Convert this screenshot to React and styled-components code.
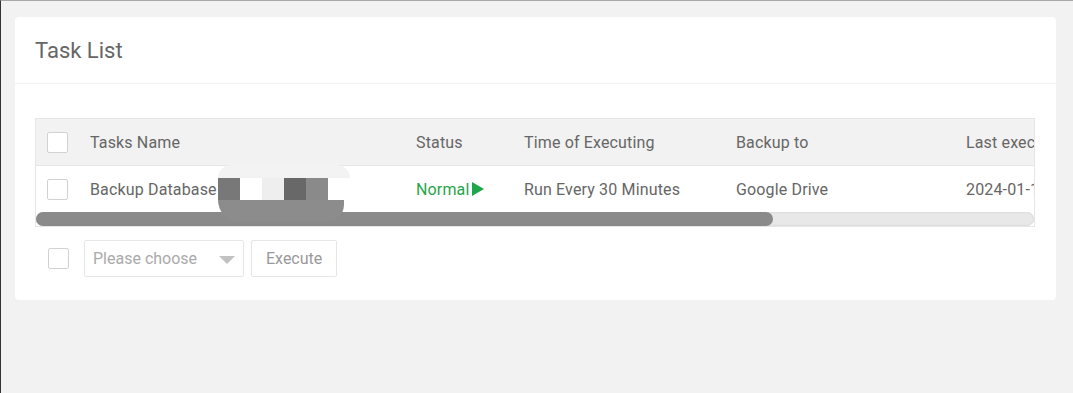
import React from "react";
import styled, { createGlobalStyle } from "styled-components";

const GlobalStyle = createGlobalStyle`
  html, body {
    margin: 0;
    padding: 0;
    background: #f2f2f2;
    font-family: Roboto, "Liberation Sans", sans-serif;
    color: #666;
  }
  body {
    min-height: 393px;
    box-sizing: border-box;
    border-top: 1px solid #a8a8a8;
    border-left: 1px solid #333;
  }
`;

const Page = styled.div`
  padding: 16px 17px 0 14px;
`;

const Card = styled.div`
  background: #fff;
  border-radius: 4px;
`;

const CardHeader = styled.div`
  height: 66px;
  display: flex;
  align-items: center;
  padding: 0 20px;
  font-size: 22px;
  color: #666;
  border-bottom: 1px solid #f2f2f2;
`;

const CardBody = styled.div`
  padding: 34px 20px 23px 20px;
`;

const TableBox = styled.div`
  position: relative;
  width: 1000px;
  border: 1px solid #e6e6e6;
  box-sizing: border-box;
  overflow: hidden;
`;

const Row = styled.div`
  display: grid;
  grid-template-columns: 40px 326px 108px 212px 230px 200px;
  height: 46px;
  align-items: center;
  background: ${(p) => (p.$head ? "#f2f2f2" : "#fff")};
  border-bottom: ${(p) => (p.$head ? "1px solid #e6e6e6" : "none")};
  white-space: nowrap;
  font-size: 16px;
  color: #666;
`;

const Cell = styled.div`
  padding-left: 14px;
  height: 100%;
  display: flex;
  align-items: center;
  box-sizing: border-box;
  letter-spacing: 0.15px;
`;

const CheckCell = styled.div`
  padding-left: 11px;
  display: flex;
  align-items: center;
`;

const Check = styled.span`
  display: inline-block;
  width: 21px;
  height: 21px;
  box-sizing: border-box;
  border: 1px solid #d2d2d2;
  border-radius: 2px;
  background: #fff;
`;

const Status = styled.span`
  color: #1fa64a;
  display: inline-flex;
  align-items: center;
  gap: 1px;
`;

const Scrollbar = styled.div`
  height: 14px;
  background: #e8e8e8;
  border-radius: 7px;
  box-shadow: inset 0 0 2px rgba(0, 0, 0, 0.15);
`;

const Thumb = styled.div`
  height: 100%;
  background: #8a8a8a;
  border-radius: 7px;
`;

const Blur = styled.div`
  position: absolute;
  left: 182px;
  top: 46px;
  width: 132px;
  height: 62px;
  pointer-events: none;
`;

const BlurTop = styled.div`
  height: 13px;
  background: #f3f3f3;
  border-radius: 30px 30px 0 0;
`;

const Mosaic = styled.div`
  display: flex;
  height: 22px;
`;

const Tile = styled.div`
  width: 22px;
  background: ${(p) => p.$c};
`;

const BlurBottom = styled.div`
  height: 22px;
  background: #8c8c8c;
  border-radius: 0 0 40px 50px;
  width: 126px;
`;

const Toolbar = styled.div`
  display: flex;
  align-items: center;
  margin-top: 13px;
  padding-left: 13px;
  gap: 15px;
`;

const Select = styled.div`
  width: 160px;
  height: 37px;
  box-sizing: border-box;
  border: 1px solid #e6e6e6;
  border-radius: 2px;
  display: flex;
  align-items: center;
  justify-content: space-between;
  padding: 0 8px 0 8px;
  font-size: 16px;
  color: #aaa;
`;

const Caret = styled.span`
  width: 0;
  height: 0;
  border-left: 8px solid transparent;
  border-right: 8px solid transparent;
  border-top: 8px solid #c2c2c2;
  margin-top: 2px;
`;

const Button = styled.div`
  height: 37px;
  box-sizing: border-box;
  padding: 0 14px;
  margin-left: -8px;
  border: 1px solid #e6e6e6;
  border-radius: 2px;
  display: flex;
  align-items: center;
  font-size: 16px;
  color: #999;
`;

export default function App() {
  return (
    <>
      <GlobalStyle />
      <Page>
        <Card>
          <CardHeader>Task List</CardHeader>
          <CardBody>
            <TableBox>
              <Row $head>
                <CheckCell><Check /></CheckCell>
                <Cell>Tasks Name</Cell>
                <Cell>Status</Cell>
                <Cell>Time of Executing</Cell>
                <Cell>Backup to</Cell>
                <Cell>Last executed</Cell>
              </Row>
              <Row>
                <CheckCell><Check /></CheckCell>
                <Cell>Backup Database</Cell>
                <Cell>
                  <Status>
                    Normal
                    <svg width="14" height="16" viewBox="0 0 14 16">
                      <path d="M1 1 L13 8 L1 15 Z" fill="#1fa64a" />
                    </svg>
                  </Status>
                </Cell>
                <Cell>Run Every 30 Minutes</Cell>
                <Cell>Google Drive</Cell>
                <Cell>2024-01-15 10:30</Cell>
              </Row>
              <Scrollbar>
                <Thumb style={{ width: "73.8%" }} />
              </Scrollbar>
              <Blur>
                <BlurTop />
                <Mosaic>
                  <Tile $c="#787878" />
                  <Tile $c="#fff" />
                  <Tile $c="#eeeeee" />
                  <Tile $c="#686868" />
                  <Tile $c="#8a8a8a" />
                  <Tile $c="#fff" />
                </Mosaic>
                <BlurBottom />
              </Blur>
            </TableBox>
            <Toolbar>
              <Check />
              <Select>
                Please choose
                <Caret />
              </Select>
              <Button>Execute</Button>
            </Toolbar>
          </CardBody>
        </Card>
      </Page>
    </>
  );
}
